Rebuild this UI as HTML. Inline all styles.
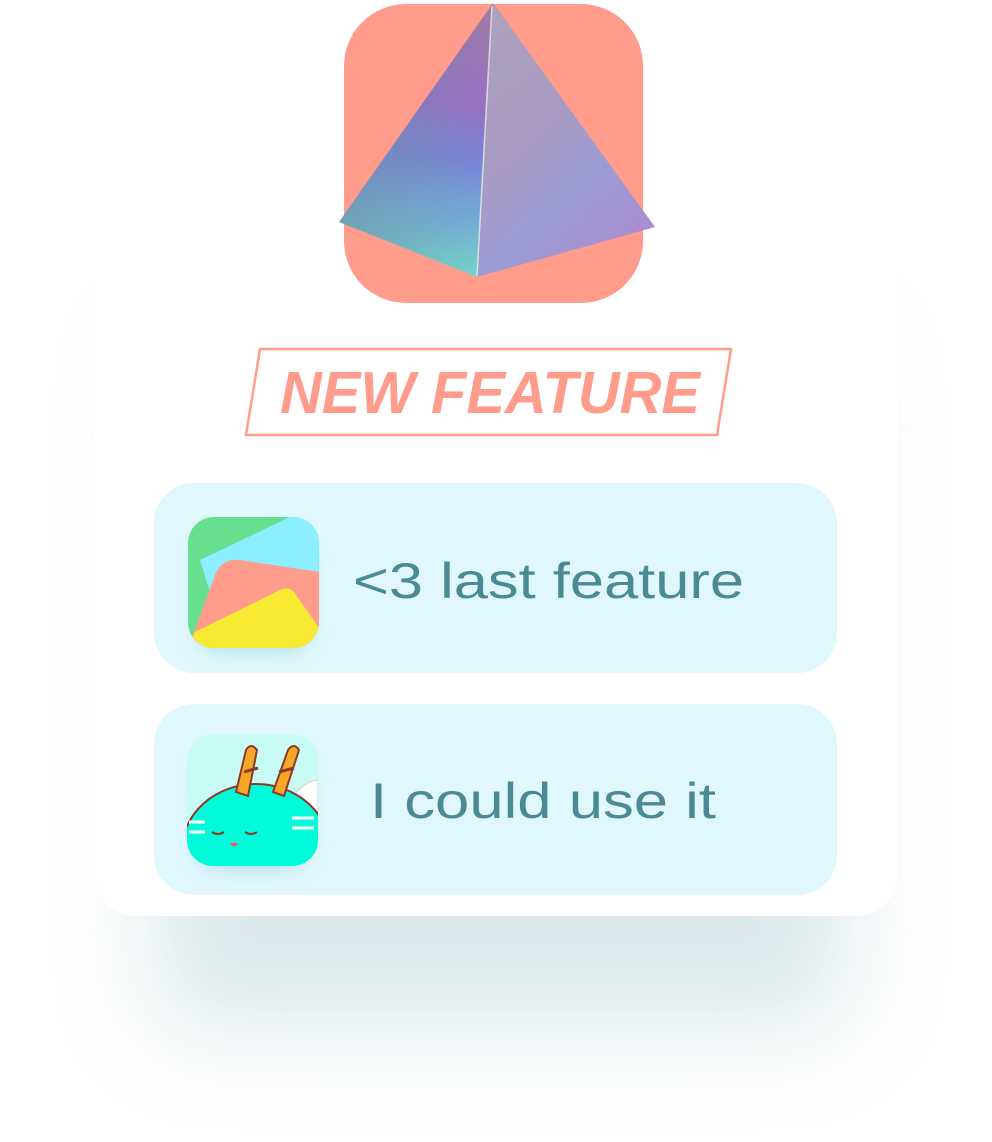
<!DOCTYPE html>
<html><head><meta charset="utf-8"><style>
html,body{margin:0;padding:0;background:#fff;width:992px;height:1142px;overflow:hidden}
</style></head><body>
<svg width="992" height="1142" viewBox="0 0 992 1142" xmlns="http://www.w3.org/2000/svg">
<defs>
<filter id="sh" filterUnits="userSpaceOnUse" x="0" y="0" width="992" height="1142"><feGaussianBlur stdDeviation="45"/></filter>
<filter id="ish" filterUnits="userSpaceOnUse" x="0" y="0" width="992" height="1142"><feGaussianBlur stdDeviation="9"/></filter>
<linearGradient id="lf" x1="0.55" y1="0" x2="0.45" y2="1">
<stop offset="0" stop-color="#a07aa6"/><stop offset="0.35" stop-color="#9670c6"/><stop offset="0.55" stop-color="#7a86dc"/><stop offset="0.78" stop-color="#74b4d8"/><stop offset="1" stop-color="#72e4cc"/></linearGradient>
<linearGradient id="lf2" x1="0" y1="0" x2="1" y2="0">
<stop offset="0" stop-color="#6e8aa0" stop-opacity="0.6"/><stop offset="1" stop-color="#6e8aa0" stop-opacity="0"/></linearGradient>
<linearGradient id="rf" x1="0" y1="0" x2="0.6" y2="1">
<stop offset="0" stop-color="#ada2bd"/><stop offset="0.5" stop-color="#a89ac2"/><stop offset="0.75" stop-color="#9c9cd4"/><stop offset="1" stop-color="#a890d0"/></linearGradient>
<clipPath id="c1"><rect x="188" y="517" width="131" height="131" rx="26"/></clipPath>
<clipPath id="c2"><rect x="187" y="734" width="131" height="132" rx="26"/></clipPath>
</defs>
<rect x="150" y="330" width="700" height="700" rx="60" fill="#bcd5da" opacity="0.5" filter="url(#sh)"/>
<rect x="94" y="180" width="804" height="736" rx="42" fill="#fff"/>
<rect x="344" y="4" width="299" height="299" rx="62" fill="#ff9c8b"/>
<polygon points="493,3 339,222 477,277" fill="url(#lf)"/>
<polygon points="493,3 339,222 477,277" fill="url(#lf2)"/>
<polygon points="493,3 477,277 655,227" fill="url(#rf)"/>
<line x1="492" y1="6" x2="477" y2="276" stroke="#e8f0e0" stroke-width="1.5" opacity="0.8"/>
<polygon points="260,349 731,349 717,435 246,435" fill="none" stroke="#ff9c8b" stroke-width="2.5"/>
<text x="280" y="413" font-family="Liberation Sans, sans-serif" font-weight="bold" font-style="italic" font-size="59" fill="#ff9c8b" textLength="420" lengthAdjust="spacingAndGlyphs">NEW FEATURE</text>
<rect x="154" y="483" width="683" height="190" rx="40" fill="#e0f8fd"/>
<rect x="198" y="540" width="112" height="112" rx="24" fill="#9fd4dc" opacity="0.7" filter="url(#ish)"/>
<g clip-path="url(#c1)">
<rect x="188" y="517" width="131" height="131" fill="#66df8e"/>
<polygon points="200,560 290,517 319,517 319,575 225,640" fill="#8cefff"/>
<path d="M188,648 L215,575 Q222,558 240,560 L319,572 L319,648 Z" fill="#ff9c8b"/>
<path d="M188,648 L195,632 L280,590 Q288,586 294,592 L319,628 L319,648 Z" fill="#f8ea32"/>
</g>
<text x="353" y="598" font-family="Liberation Sans, sans-serif" font-size="50" fill="#4a8a94" textLength="391" lengthAdjust="spacingAndGlyphs">&lt;3 last feature</text>
<rect x="154" y="704" width="683" height="191" rx="40" fill="#e0f8fd"/>
<rect x="197" y="757" width="112" height="112" rx="24" fill="#9fd4dc" opacity="0.7" filter="url(#ish)"/>
<g clip-path="url(#c2)">
<rect x="187" y="734" width="131" height="132" fill="#c8fbf4"/>
<path d="M290,800 Q305,780 318,780 L318,815 Z" fill="#fff" stroke="#d6c8c8" stroke-width="1"/>
<ellipse cx="256" cy="850" rx="74" ry="66" fill="#00fbd8" stroke="#8a3a2a" stroke-width="2"/>
<path d="M236,792 L246,750 Q251,742 257,750 L248,796 Z" fill="#f8a628" stroke="#8a3a2a" stroke-width="2"/>
<path d="M273,792 L288,750 Q294,742 299,750 L284,796 Z" fill="#f8a628" stroke="#8a3a2a" stroke-width="2"/>
<path d="M244,772 L258,768 M279,772 L294,768" stroke="#8a3a2a" stroke-width="3"/>
<path d="M212,832 q6,4 12,0 M245,832 q6,4 12,0" stroke="#8a3a2a" stroke-width="2" fill="none"/>
<path d="M230,843 q4,7 8,0 z" fill="#ff4d6d"/>
<g stroke="#fff" stroke-width="3"><path d="M189,822 l16,0 M189,832 l16,0 M292,818 l22,0 M292,828 l22,0"/></g>
</g>
<text x="370" y="818" font-family="Liberation Sans, sans-serif" font-size="50" fill="#4a8a94" textLength="346" lengthAdjust="spacingAndGlyphs">I could use it</text>
</svg>
</body></html>
